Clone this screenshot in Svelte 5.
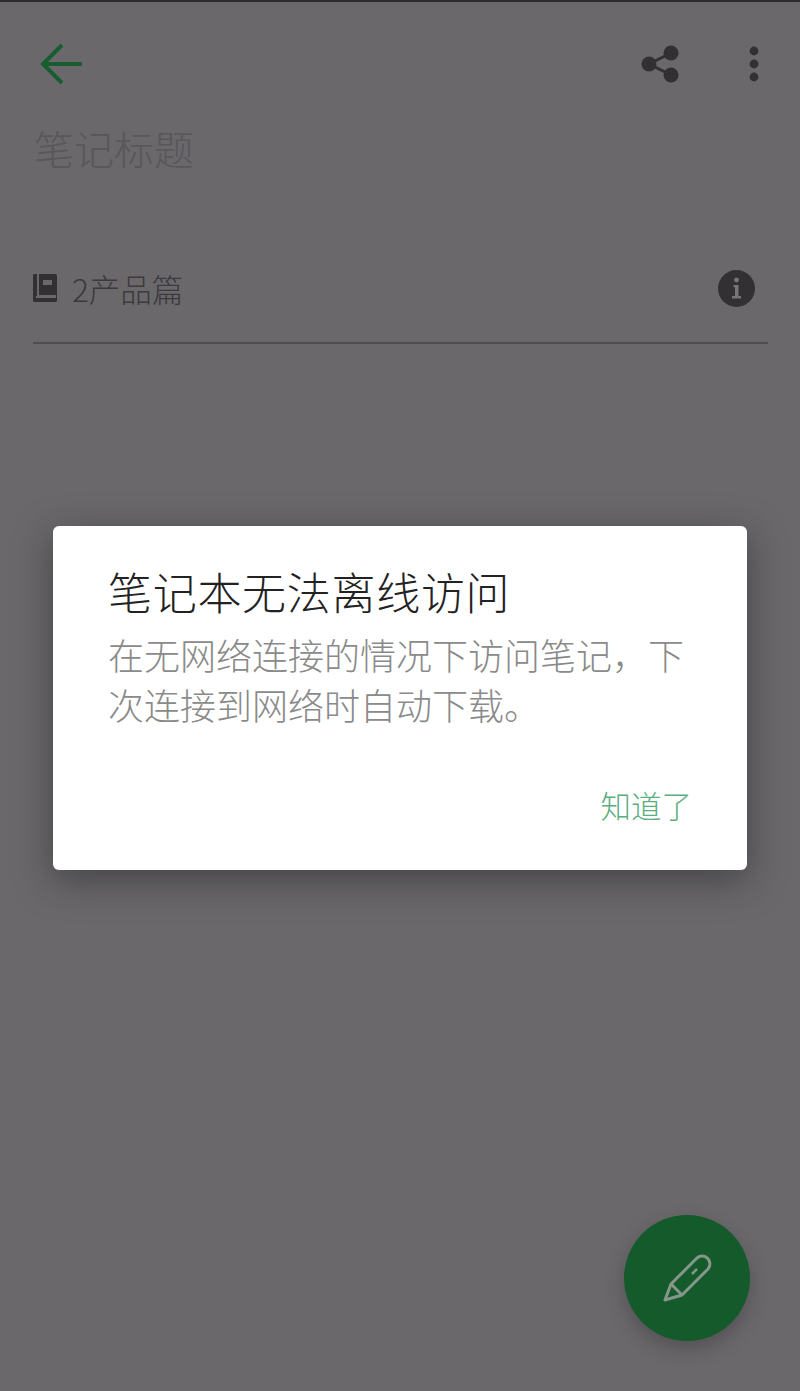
<script lang="ts">
  let title = '笔记本无法离线访问';
</script>

<div class="page">
  <header class="topbar">
    <button class="icon-btn back" aria-label="Back">
      <svg width="46" height="44" viewBox="0 0 46 44" fill="none" stroke="#185c2f" stroke-width="4">
        <path d="M44 22H5M24 3L5 22L24 41" />
      </svg>
    </button>
    <div class="actions">
      <svg class="share" width="38" height="38" viewBox="0 0 38 38" fill="#323033">
        <circle cx="8" cy="19" r="7.5" />
        <circle cx="30" cy="8" r="7.5" />
        <circle cx="30" cy="30" r="7.5" />
        <path d="M8 19L30 8M8 19L30 30" stroke="#323033" stroke-width="3" />
      </svg>
      <svg class="more" width="10" height="36" viewBox="0 0 10 36" fill="#323033">
        <circle cx="5" cy="5" r="4.4" />
        <circle cx="5" cy="18" r="4.4" />
        <circle cx="5" cy="31" r="4.4" />
      </svg>
    </div>
  </header>

  <div class="note-title">笔记标题</div>

  <div class="notebook-row">
    <svg class="book" width="24" height="28" viewBox="0 0 24 28">
      <rect width="24" height="28" rx="1.5" fill="#323033" />
      <path fill="#6a686b" d="M4 0H6V21H23V24H3V22H4Z" />
      <rect x="10" y="6" width="9" height="5" fill="#6a686b" />
    </svg>
    <span class="notebook-name">2产品篇</span>
    <svg class="info" width="37" height="37" viewBox="0 0 37 37">
      <circle cx="18.5" cy="18.5" r="18.5" fill="#323033" />
      <circle cx="18.5" cy="10" r="2.4" fill="#77757a" />
      <path fill="#77757a" d="M15.5 15H20.5V26H23V28.5H14V26H17V17.2H15.5Z" />
    </svg>
  </div>

  <div class="overlay">
    <div class="dialog">
      <h2>{title}</h2>
      <p>在无网络连接的情况下访问笔记&#xFF0C;下次连接到网络时自动下载。</p>
      <div class="dialog-actions">
        <button class="ok">知道了</button>
      </div>
    </div>
  </div>

  <button class="fab" aria-label="Edit">
    <svg width="50" height="50" viewBox="0 0 50 50" fill="none" stroke="#84978a" stroke-width="3" stroke-linejoin="round">
      <path d="M3 47L9 31L35 5A7.8 7.8 0 0 1 46 16L20 42Z" />
      <path d="M9 31L20 42" />
      <path d="M30 21L35 16" stroke-width="2.5" />
    </svg>
  </button>
</div>

<style>
  :global(body) {
    margin: 0;
    background: #6a686b;
  }
  .page {
    position: relative;
    width: 800px;
    height: 1391px;
    box-sizing: border-box;
    overflow: hidden;
    background: #6a686b;
    border-top: 2px solid #2b2a2c;
    font-family: "Noto Sans CJK SC", "Liberation Sans", sans-serif;
    font-weight: 300;
  }
  .topbar {
    display: flex;
    align-items: center;
    justify-content: space-between;
    padding: 40px 41px 0 38px;
    height: 44px;
  }
  .icon-btn {
    display: flex;
    padding: 0;
    background: none;
    border: none;
  }
  .actions {
    display: flex;
    align-items: center;
    gap: 70px;
  }
  .note-title {
    margin: 38px 0 0 34px;
    font-size: 40px;
    line-height: 48px;
    color: #59575a;
  }
  .notebook-row {
    display: flex;
    align-items: center;
    margin: 96px 32px 0 33px;
    padding: 0 13px 34px 0;
    border-bottom: 2px solid #4f4d50;
  }
  .book {
    flex-shrink: 0;
  }
  .notebook-name {
    flex: 1;
    margin-left: 15px;
    font-size: 31.5px;
    line-height: 40px;
    color: #3c3a3d;
  }
  .overlay {
    position: absolute;
    top: 524px;
    left: 53px;
  }
  .dialog {
    box-sizing: border-box;
    width: 694px;
    height: 344px;
    padding: 37px 55px 0;
    background: #fff;
    border-radius: 6px;
    box-shadow: 0 10px 36px rgba(30, 29, 31, 0.5);
  }
  h2 {
    margin: 0;
    font-size: 44px;
    font-weight: 300;
    letter-spacing: 0.7px;
    line-height: 56px;
    color: #222;
  }
  p {
    margin: 10px 0 0;
    font-size: 36px;
    line-height: 50px;
    color: #8a8a8a;
  }
  .dialog-actions {
    display: flex;
    justify-content: flex-end;
    margin: 54px 0 0;
  }
  .ok {
    padding: 0;
    background: none;
    border: none;
    font-family: inherit;
    font-weight: 300;
    font-size: 30.5px;
    line-height: 44px;
    color: #5aae80;
  }
  .fab {
    position: absolute;
    left: 624px;
    top: 1213px;
    display: flex;
    align-items: center;
    justify-content: center;
    width: 126px;
    height: 126px;
    padding: 0;
    border: none;
    border-radius: 50%;
    background: #145a2b;
    box-shadow: 0 8px 18px rgba(40, 40, 42, 0.35);
  }
</style>
